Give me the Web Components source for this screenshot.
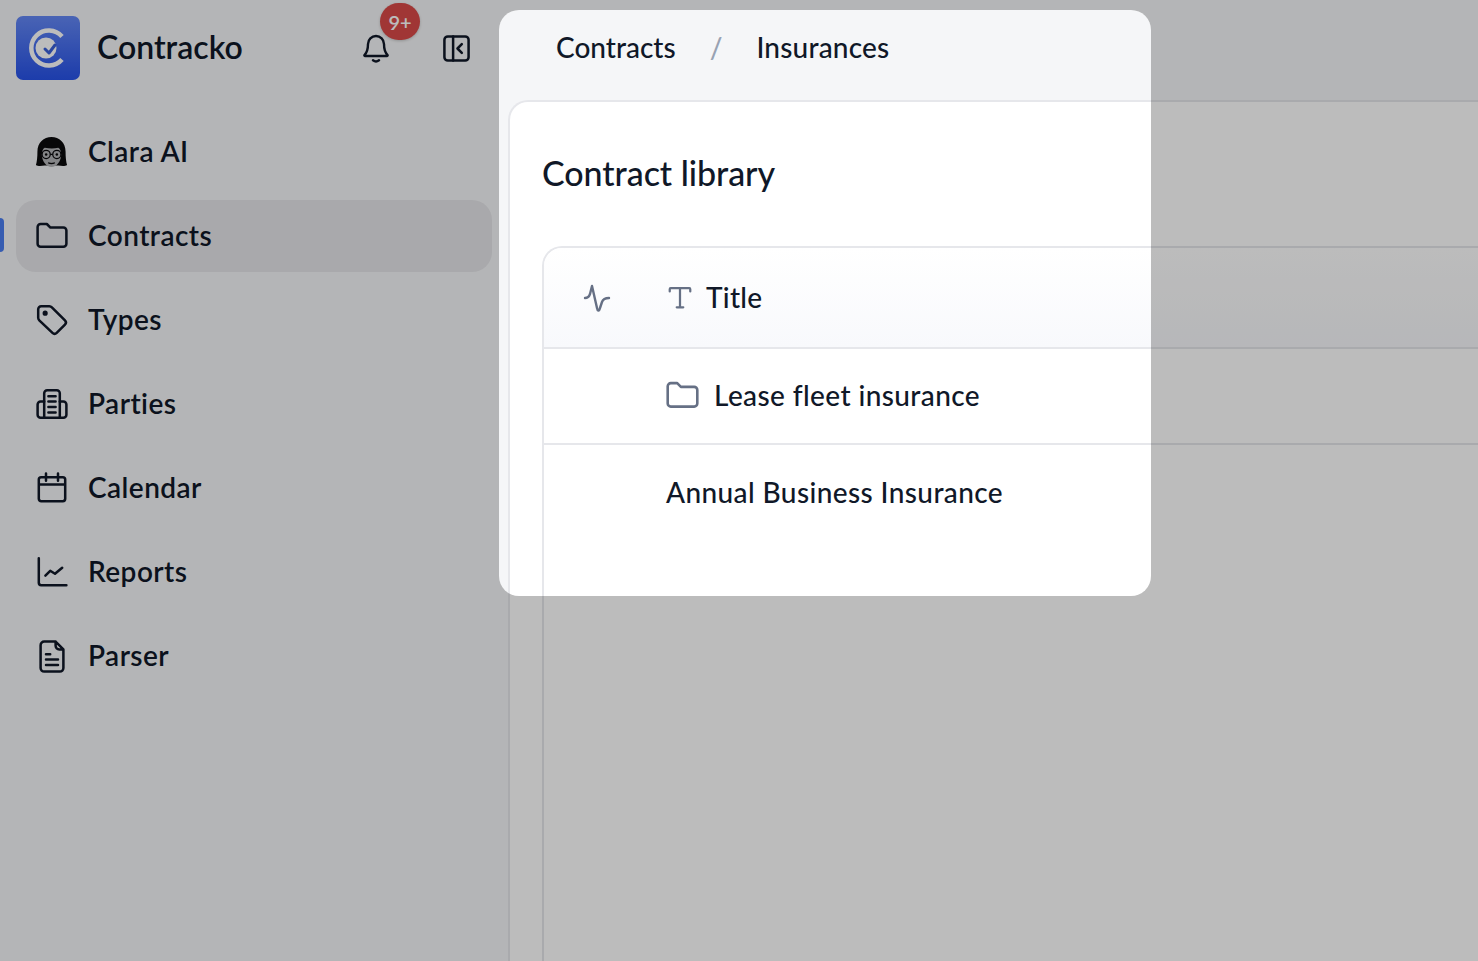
<!doctype html>
<html><head><meta charset="utf-8"><style>
html,body{margin:0;height:100%;overflow:hidden;background:#f5f6f8;font-family:"Lato","Noto Sans",sans-serif;color:#101828}
</style></head><body>
<app-shell>
  <app-sidebar slot="sidebar">
    <nav-item label="Clara AI" icon="clara"></nav-item>
    <nav-item label="Contracts" icon="folder" active></nav-item>
    <nav-item label="Types" icon="tag"></nav-item>
    <nav-item label="Parties" icon="building"></nav-item>
    <nav-item label="Calendar" icon="calendar"></nav-item>
    <nav-item label="Reports" icon="chart"></nav-item>
    <nav-item label="Parser" icon="file"></nav-item>
  </app-sidebar>
  <bread-crumbs slot="top"></bread-crumbs>
  <contract-library slot="main"></contract-library>
</app-shell>
<tour-spotlight></tour-spotlight>
<script>
const ICONS={
folder:'<path d="M3 7.500A2.500 2.500 0 0 1 5.500 5h5.200l3 3H24.500A2.500 2.500 0 0 1 27 10.500v11a2.500 2.500 0 0 1-2.500 2.500h-19A2.500 2.500 0 0 1 3 21.500z"/>',
tag:'<path d="M3.500 6A2.500 2.500 0 0 1 6 3.500h6.800a3 3 0 0 1 2.100.9l10.900 10.900a2.500 2.500 0 0 1 0 3.500l-6.900 6.900a2.500 2.500 0 0 1-3.500 0L4.400 15.300a3 3 0 0 1-.9-2.100z"/><circle cx="9.300" cy="9.300" r="1.100" fill="currentColor"/>',
building:'<path d="M8.500 26V6a2.500 2.500 0 0 1 2.500-2.500h8A2.500 2.500 0 0 1 21.500 6v20"/><path d="M8.500 13H5.500A2.500 2.500 0 0 0 3 15.500v8.500A2.500 2.500 0 0 0 5.500 26.500h19a2.500 2.500 0 0 0 2.500-2.500v-8.500a2.500 2.500 0 0 0-2.500-2.500H21.500M8.500 26.500h13M12 8.500h6M12 13h6M12 17.500h6M12 22h6"/>',
calendar:'<path d="M6 6h18a2 2 0 0 1 2 2v16a2 2 0 0 1-2 2H6a2 2 0 0 1-2-2V8a2 2 0 0 1 2-2zM4 12h22M10 3v6M20 3v6"/>',
chart:'<path d="M4 3.500V24a2 2 0 0 0 2 2h21M9.500 18l4-4 4 2.500 6-5"/>',
file:'<path d="M18 3H8.500A3 3 0 0 0 5.500 6v19a3 3 0 0 0 3 3h13a3 3 0 0 0 3-3V9.500zM18 3v3.500a3 3 0 0 0 3 3h3.500M10 13.500h3.500M10 18h10M10 22.500h10"/>',
bell:'<path d="M15 3a8 8 0 0 0-8 8c0 6-1.500 9-3.500 11a.6.6 0 0 0 .4 1h22.200a.6.6 0 0 0 .4-1C24.500 20 23 17 23 11a8 8 0 0 0-8-8zM12 27.300c1.800 1.400 4.200 1.400 6 0"/>',
collapse:'<rect x="2.500" y="2.500" width="25" height="25" rx="3.500"/><path d="M11.500 2.500v25M20.500 10.500 16 15l4.500 4.500"/>',
pulse:'<path d="M2 15c3 0 4-1 5-4l2-8 5 22c.5 3 2 4 3 0l2-6c1-3 3-4 7-4"/>',
type:'<path d="M4 8V5.500A1 1 0 0 1 5 4.500h20a1 1 0 0 1 1 1V8M15 4.500V25M11.500 25h7"/>',
};
function icon(n,size,sw){return `<svg style="flex:none" width="${size}" height="${size}" viewBox="0 0 30 30" fill="none" stroke="currentColor" stroke-width="${sw||2.4}" stroke-linecap="round" stroke-linejoin="round" aria-hidden="true">${ICONS[n]}</svg>`}
const CLARA=`<svg style="flex:none;margin-left:-1px" width="33" height="33" viewBox="0 0 34 34" aria-hidden="true"><path d="M1 30c1-4 1.500-8 1.500-14C2.500 7 9 1 17 1s14.500 6 14.500 15c0 6 .5 10 1.500 14-2 1.500-6 1-9 .5H10c-3 .5-7 1-9-.5z" fill="#0a0a0c"/><path d="M7 19c0-3 1-6 3-7 5 1 10 1 14 0 2 1 3 4 3 7 0 7-5 13-10 13S7 26 7 19z" fill="#b4b5b8"/><g fill="none" stroke="#0a0a0c" stroke-width="1.300"><circle cx="11.500" cy="19" r="4.200"/><circle cx="22.500" cy="19" r="4.200"/><path d="M15.700 19h2.600M4.500 18h2.800M26.700 18h2.800"/></g><circle cx="11.500" cy="19" r="1.300" fill="#0a0a0c"/><circle cx="22.500" cy="19" r="1.300" fill="#0a0a0c"/><path d="M13.500 27.500c2 1 5 1 7 0" stroke="#0a0a0c" stroke-width="1.200" fill="#6b6b6e"/></svg>`;

class Base extends HTMLElement{
  html(s){this.attachShadow({mode:'open'}).innerHTML=s}
}
customElements.define('app-shell',class extends Base{connectedCallback(){this.html(`<style>
:host{display:grid;grid-template-columns:508px 1fr;grid-template-rows:100px 1fr;width:1478px;height:961px;overflow:hidden}
.side{grid-row:1/3}
.main{background:#fff;border-left:2px solid #e6e7eb;border-top:2px solid #e6e7eb;border-top-left-radius:20px;box-sizing:border-box;min-height:0}
</style><div class="side"><slot name="sidebar"></slot></div><div><slot name="top"></slot></div><div class="main"><slot name="main"></slot></div>`)}});
customElements.define('app-sidebar',class extends Base{connectedCallback(){this.html(`<style>
:host{display:block;padding:16px 16px 0 16px}
.head{display:flex;align-items:center;height:64px;margin-bottom:36px}
.logo{width:64px;height:64px;border-radius:7px;background:linear-gradient(#6488f5,#2752e8);display:flex;align-items:center;justify-content:center;flex:none}
.name{font-size:32px;font-weight:600;margin-left:17px;padding-bottom:3px;color:#101828;flex:1}
.btn{display:flex;position:relative;color:#101828}
.bell{margin-right:51px}
.collapse{margin-right:21px}
.badge{position:absolute;left:19px;top:-30px;width:40px;height:37px;border-radius:19px;background:#d94a48;color:#fff;font-size:20px;font-weight:600;display:flex;align-items:center;justify-content:center;box-shadow:0 1px 3px rgba(0,0,0,.2)}
.nav{display:flex;flex-direction:column;gap:12px}
</style><div class="head"><span class="logo"><svg width="44" height="44" viewBox="0 0 44 44" fill="none" aria-hidden="true"><path d="M36 10.500A17.500 17.500 0 1 0 36 33.500" stroke="#fff" stroke-width="4.500"/><circle cx="20" cy="22" r="10.500" fill="#fff"/><path d="M19 23l4 4 6-8" stroke="#3a60d8" stroke-width="3" stroke-linecap="round" stroke-linejoin="round"/></svg></span><span class="name">Contracko</span><span class="btn bell">${icon('bell',30)}<span class="badge">9+</span></span><span class="btn collapse">${icon('collapse',29,2.6)}</span></div><div class="nav"><slot></slot></div>`)}});
customElements.define('nav-item',class extends Base{connectedCallback(){
const n=this.getAttribute('icon');
this.html(`<style>
:host{display:flex;align-items:center;height:72px;border-radius:20px;padding-left:21px;gap:21px;position:relative;font-size:28px;font-weight:600;letter-spacing:.45px;color:#101828}
:host([active]){background:#e5e6ea}
:host([active])::before{content:"";position:absolute;left:-16px;top:18px;width:4px;height:34px;background:#4a7df0;border-radius:0 6px 6px 0}
.i{width:30px;height:30px;display:flex;align-items:center;justify-content:center}
.l{padding-bottom:2px}
</style><span class="i">${n==='clara'?CLARA:icon(n,36,2.1)}</span><span class="l">${this.getAttribute('label')}</span>`)}});
customElements.define('bread-crumbs',class extends Base{connectedCallback(){this.html(`<style>
:host{display:flex;align-items:center;height:100px;padding:0 0 6px 48px;box-sizing:border-box;font-size:28px;font-weight:500;color:#101828}
.s{color:#98a2b3;margin:0 34px}
</style><span>Contracts</span><span class="s">/</span><span style="letter-spacing:.2px">Insurances</span>`)}});
customElements.define('contract-library',class extends Base{connectedCallback(){this.html(`<style>
:host{display:flex;flex-direction:column;padding:0 0 0 32px;height:100%;box-sizing:border-box}
h1{margin:0;height:144px;display:flex;align-items:center;font-size:34px;font-weight:500;color:#101828;box-sizing:border-box;padding-bottom:4px;letter-spacing:-.05px}
.t{flex:1;border:2px solid #e6e7eb;border-right:0;border-bottom:0;border-top-left-radius:20px}
.hr{height:101px;background:linear-gradient(#fff,#f8f9fc);display:flex;align-items:center;border-bottom:2px solid #e6e7eb;box-sizing:border-box;font-size:28px;font-weight:500;letter-spacing:.3px;border-top-left-radius:18px}
.c1{width:122px;flex:none;padding-left:39px;box-sizing:border-box;color:#667085;display:flex}
.t1{display:flex;align-items:center;gap:12px;padding-bottom:2px}
.tt{color:#667085;display:flex;margin-top:2px}
.r{height:96px;border-bottom:2px solid #e6e7eb;box-sizing:border-box;display:flex;align-items:center;font-size:28px;font-weight:500;letter-spacing:.4px;padding:0 0 2px 122px}
.r.l{border-bottom:0}
.f{color:#667085;display:flex;margin:0 13px 0 -2px}
</style><h1>Contract library</h1><div class="t"><div class="hr"><span class="c1">${icon('pulse',30)}</span><span class="t1"><span class="tt">${icon('type',28)}</span>Title</span></div><div class="r"><span class="f">${icon('folder',37,2.1)}</span>Lease fleet insurance</div><div class="r l">Annual Business Insurance</div></div>`)}});
customElements.define('tour-spotlight',class extends Base{connectedCallback(){this.html(`<style>
:host{position:fixed;left:499px;top:10px;width:652px;height:586px;border-radius:20px;box-shadow:0 0 0 2000px rgba(0,0,0,.262);pointer-events:none;z-index:10}
</style>`)}});
</script>
</body></html>
